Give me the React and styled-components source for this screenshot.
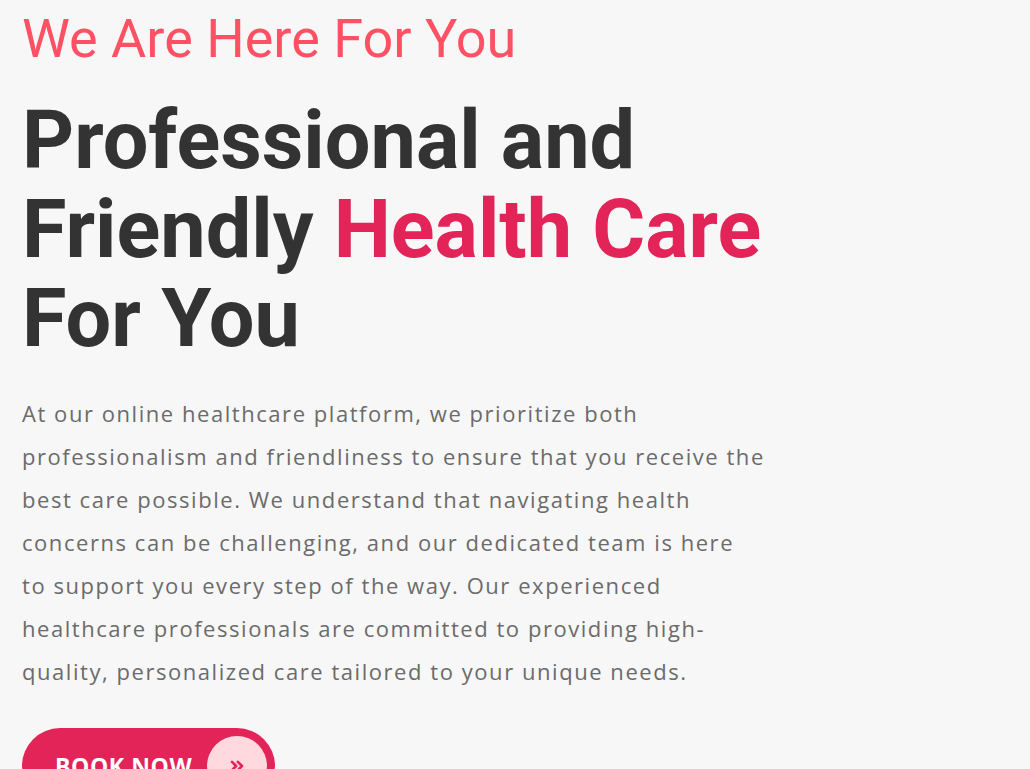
import React from "react";
import styled, { createGlobalStyle } from "styled-components";

const GlobalStyle = createGlobalStyle`
  html, body {
    margin: 0;
    padding: 0;
    background: #f7f7f7;
  }
`;

const Hero = styled.section`
  display: flex;
  flex-direction: column;
  align-items: flex-start;
  padding: 0 22px;
  min-height: 769px;
  overflow: hidden;
`;

const Kicker = styled.h3`
  margin: 12px 0 0;
  font-family: Roboto, "Liberation Sans", sans-serif;
  font-weight: 400;
  font-size: 54px;
  line-height: 1;
  color: #ff5064;
`;

const Title = styled.h1`
  margin: 30px 0 0;
  font-family: Roboto, "Liberation Sans", sans-serif;
  font-weight: 700;
  font-size: 81px;
  line-height: 89px;
  color: #333333;
`;

const Accent = styled.span`
  color: #e22458;
`;

const Text = styled.p`
  margin: 29px 0 0;
  font-family: "Open Sans", "Liberation Sans", sans-serif;
  font-weight: 400;
  font-size: 22px;
  line-height: 43px;
  letter-spacing: 1.55px;
  color: #6b6b6b;
  white-space: nowrap;
`;

const BookButton = styled.a`
  margin-top: 35px;
  display: inline-flex;
  align-items: center;
  gap: 15px;
  padding: 8px 8px 8px 33px;
  border-radius: 40px;
  background: #e22458;
  color: #ffffff;
  text-decoration: none;
  font-family: "Open Sans", "Liberation Sans", sans-serif;
  font-weight: 700;
  font-size: 23px;
  letter-spacing: 0.6px;
`;

const IconCircle = styled.span`
  width: 60px;
  height: 60px;
  border-radius: 50%;
  background: #ffd9dd;
  display: flex;
  align-items: center;
  justify-content: center;
  color: #e22458;
`;

const lines = [
  "At our online healthcare platform, we prioritize both",
  "professionalism and friendliness to ensure that you receive the",
  "best care possible. We understand that navigating health",
  "concerns can be challenging, and our dedicated team is here",
  "to support you every step of the way. Our experienced",
  "healthcare professionals are committed to providing high-",
  "quality, personalized care tailored to your unique needs.",
];

export default function App() {
  return (
    <>
      <GlobalStyle />
      <Hero>
        <Kicker>We Are Here For You</Kicker>
        <Title>
          Professional and
          <br />
          Friendly <Accent>Health Care</Accent>
          <br />
          For You
        </Title>
        <Text>
          {lines.map((l, i) => (
            <React.Fragment key={i}>
              {l}
              {i < lines.length - 1 && <br />}
            </React.Fragment>
          ))}
        </Text>
        <BookButton href="#">
          BOOK NOW
          <IconCircle>
            <svg width="20" height="20" viewBox="0 0 24 24" fill="none" stroke="currentColor" strokeWidth="3.2" strokeLinecap="round" strokeLinejoin="round">
              <path d="m6 17 5-5-5-5" />
              <path d="m13 17 5-5-5-5" />
            </svg>
          </IconCircle>
        </BookButton>
      </Hero>
    </>
  );
}
